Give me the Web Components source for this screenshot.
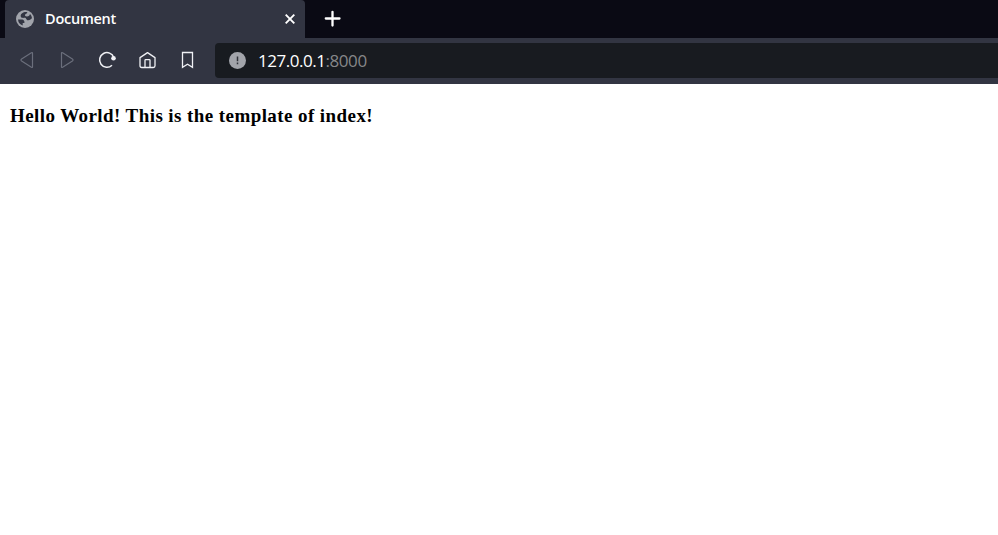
<!DOCTYPE html>
<html lang="en"><head><meta charset="utf-8"><title>Document</title>
<style>html,body{margin:0;height:100%;overflow:hidden;background:#fff}</style></head>
<body>
<browser-window>
  <browser-tab slot="tabs">Document</browser-tab>
  <address-bar slot="address">127.0.0.1<span slot="port">:8000</span></address-bar>
  <page-content>Hello World! This is the template of index!</page-content>
</browser-window>
<script>
const define = (name, html) => {
  const template = document.createElement('template');
  template.innerHTML = html;
  customElements.define(name, class extends HTMLElement {
    constructor() { super(); this.attachShadow({mode:'open'}).append(template.content.cloneNode(true)); }
  });
};
define('browser-tab', `<style>
:host{display:flex;box-sizing:border-box;width:300px;height:38px;align-items:center;padding:0 9px 0 10px;background:#323542;border-radius:4px 4px 0 0;color:#fff;font:600 14.5px/20px "Open Sans","Noto Sans",sans-serif}
span{margin-left:10px;flex:1;letter-spacing:-.25px;white-space:nowrap}svg{display:block;flex:none}</style>
<svg width="20" height="20" viewBox="0 0 20 20"><circle cx="10" cy="10" r="9" fill="#a1a4ab"/><path d="M12.3 3.2C10.5 2.8 8.4 3.2 7.2 4.2C5.3 5.1 5.2 8.2 7 8.8C8.7 9.3 9.8 8.3 10.8 9.2C11.5 10 11.6 11.3 13.2 11.3C15.2 11.3 16 9.9 17 9.3C16.8 7.5 16.1 6.2 14.9 5.1C14.9 6.7 13.6 7.4 12 7.4C10.2 7.4 9.3 6.2 10.4 5.2C11.2 4.5 12.3 4.5 12.3 3.2Z" fill="#323542"/><path d="M3 10.6H6.2C9.3 10.6 9.7 12.5 9.4 14.1H7.7V16.6A7 7 0 0 1 3 10.6Z" fill="#323542"/></svg>
<span><slot></slot></span><svg width="12" height="12" viewBox="0 0 12 12"><path d="M1.7 1.7L10.3 10.3M10.3 1.7L1.7 10.3" stroke="#fff" stroke-width="1.9"/></svg>`);
define('nav-controls', `<style>:host{display:flex;align-items:center;gap:20px;padding:0 0 2px 17px;width:198px;box-sizing:border-box}svg{display:block;width:20px;height:20px;fill:none;stroke:#f0f1f5;stroke-width:1.3;stroke-linejoin:round;flex:none}.off{stroke:#6b6f7c;stroke-width:1.2}</style>
<svg class="off" viewBox="0 0 20 20"><path d="M14.4 2.7Q15.5 2.1 15.5 3.3V16.7Q15.5 17.9 14.4 17.3L4.6 11Q3.3 10 4.6 9Z"/></svg>
<svg class="off" viewBox="0 0 20 20"><path d="M5.6 2.7Q4.5 2.1 4.5 3.3V16.7Q4.5 17.9 5.6 17.3L15.4 11Q16.7 10 15.4 9Z"/></svg>
<svg viewBox="0 0 20 20"><path d="M15 15.2A7.3 7.3 0 1 1 16.8 7.5" stroke-width="1.5"/><circle cx="16.5" cy="8.3" r="2.3" fill="#f0f1f5" stroke="none"/></svg>
<svg viewBox="0 0 20 20"><path transform="translate(.5)" d="M2.5 7.6L10 2.6L17.5 7.6V15.8Q17.5 17.5 15.8 17.5H4.2Q2.5 17.5 2.5 15.8ZM7.5 17.2V10.3Q7.5 9.6 8.2 9.6H11.8Q12.5 9.6 12.5 10.3V17.2"/></svg>
<svg viewBox="0 0 20 20"><path transform="translate(.5)" d="M5 2.5H15V17.3L10 14.3L5 17.3Z" stroke-linejoin="miter"/></svg>`);
define('address-bar', `<style>:host{display:flex;flex:1;height:35px;margin:5px 0 6px;background:#181b20;border-radius:4px 0 0 4px;align-items:center;padding-left:14px;color:#fff;font:17px/24px "Open Sans","Noto Sans",sans-serif}svg{display:block;margin-right:12px}span{white-space:nowrap;letter-spacing:-.46px}.port{color:#868789}</style>
<svg width="17" height="17" viewBox="0 0 17 17"><circle cx="8.5" cy="8.5" r="8.5" fill="#a2a4aa"/><path d="M8.5 4.5V9.2M8.5 10.6V12.3" stroke="#30323a" stroke-width="1.5"/></svg><span><slot></slot></span><span class="port"><slot name="port"></slot></span>`);
define('page-content', `<style>:host{display:block;padding:21px 10px;color:#000}h1{margin:0;font:bold 19px/22px "Liberation Serif",serif;letter-spacing:.42px;white-space:nowrap}</style><h1><slot></slot></h1>`);
define('browser-window', `<style>:host{display:block;height:100vh;background:#fff}.tabs{height:38px;display:flex;background:#0a0a14;padding-left:5px;align-items:center}.tabs svg{display:block;margin:0 0 1px 19px}.tools{height:46px;display:flex;background:#323542}nav-controls{margin-right:17px}</style>
<div class="tabs"><slot name="tabs"></slot><svg width="17" height="17" viewBox="0 0 17 17"><path d="M8.5 1.8V15.5M1.8 8.5H15.5" stroke="#fff" stroke-width="2.3" stroke-linecap="round"/></svg></div>
<div class="tools"><nav-controls></nav-controls><slot name="address"></slot></div><slot></slot>`);
</script></body></html>
